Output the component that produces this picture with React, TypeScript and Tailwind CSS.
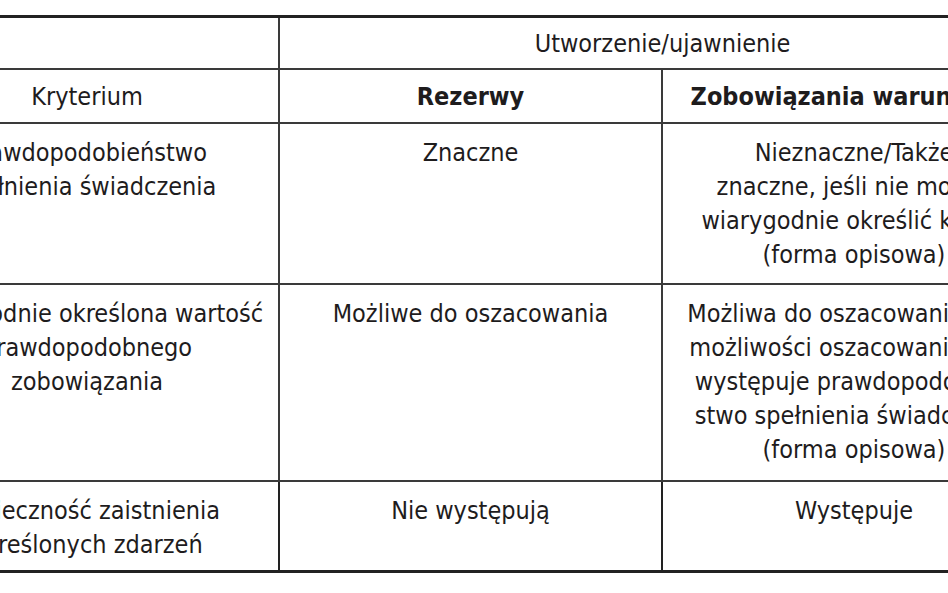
import React from 'react';

type Row = {
  label: string[];
  reserves: string[];
  contingent: string[];
  height: string;
};

// rows of the comparison table; line breaks follow the printed layout
const rows: Row[] = [
  {
    label: ['Prawdopodobieństwo', 'spełnienia świadczenia'],
    reserves: ['Znaczne'],
    contingent: ['Nieznaczne/Także', 'znaczne, jeśli nie można', 'wiarygodnie określić kwoty', '(forma opisowa)'],
    height: 'h-[161px]',
  },
  {
    label: ['Wiarygodnie określona wartość', 'prawdopodobnego', 'zobowiązania'],
    reserves: ['Możliwe do oszacowania'],
    contingent: [
      'Możliwa do oszacowania/brak',
      'możliwości oszacowania, gdy',
      'występuje prawdopodobień-',
      'stwo spełnienia świadczenia',
      '(forma opisowa)',
    ],
    height: 'h-[197px]',
  },
  {
    label: ['Konieczność zaistnienia', 'określonych zdarzeń'],
    reserves: ['Nie występują'],
    contingent: ['Występuje'],
    height: 'h-[91px]',
  },
];

const Lines = ({ lines }: { lines: string[] }) => (
  <>
    {lines.map((l, i) => (
      <div key={i} className="whitespace-nowrap">
        {l}
      </div>
    ))}
  </>
);

const cell = 'border-[#3a3a3a] text-center align-top pt-[12px]';

export default function App() {
  return (
    <div
      className="w-[948px] h-[593px] overflow-hidden bg-white text-[#1e1c1d]"
      style={{ fontFamily: '"DejaVu Sans Condensed", "Liberation Sans Narrow", "Open Sans", sans-serif' }}
    >
      <table className="ml-[-104px] mt-[15px] table-fixed border-collapse w-[1149px] text-[25px] leading-[34px]">
        <colgroup>
          <col className="w-[383px]" />
          <col className="w-[383px]" />
          <col className="w-[383px]" />
        </colgroup>
        <thead>
          <tr className="h-[52px] border-t-[3px] border-[#222]">
            <th className="border-r-2 border-b-2 border-[#3a3a3a]" />
            <th colSpan={2} className="border-b-2 border-[#3a3a3a] font-normal align-middle pt-[2px]">
              Utworzenie/ujawnienie
            </th>
          </tr>
          <tr className="h-[54px]">
            <th className="border-r-2 border-b-2 border-[#3a3a3a] font-normal align-middle pt-[2px]">Kryterium</th>
            <th className="border-r-2 border-b-2 border-[#3a3a3a] font-bold align-middle pt-[2px]">Rezerwy</th>
            <th className="border-b-2 border-[#3a3a3a] font-bold align-middle pt-[2px]">Zobowiązania warunkowe</th>
          </tr>
        </thead>
        <tbody>
          {rows.map((r, i) => {
            const last = i === rows.length - 1;
            const bottom = last ? 'border-b-[3px] border-[#222]' : 'border-b-2';
            return (
              <tr key={i} className={r.height}>
                <td className={`${cell} border-r-2 ${bottom}`}>
                  <Lines lines={r.label} />
                </td>
                <td className={`${cell} border-r-2 ${bottom}`}>
                  <Lines lines={r.reserves} />
                </td>
                <td className={`${cell} ${bottom}`}>
                  <Lines lines={r.contingent} />
                </td>
              </tr>
            );
          })}
        </tbody>
      </table>
    </div>
  );
}
